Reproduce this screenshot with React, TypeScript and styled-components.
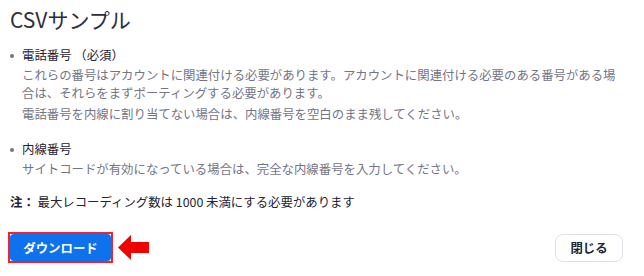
import styled, { createGlobalStyle } from 'styled-components'

const GlobalStyle = createGlobalStyle`
  body {
    margin: 0;
    background: #fff;
    font-family: "Noto Sans CJK JP", "Noto Sans", sans-serif;
  }
`

const items = [
  {
    label: '電話番号 （必須）',
    paragraphs: [
      'これらの番号はアカウントに関連付ける必要があります。アカウントに関連付ける必要のある番号がある場合は、それらをまずポーティングする必要があります。',
      '電話番号を内線に割り当てない場合は、内線番号を空白のまま残してください。',
    ],
  },
  {
    label: '内線番号',
    paragraphs: ['サイトコードが有効になっている場合は、完全な内線番号を入力してください。'],
  },
]

const App = () => {
  return (
    <Dialog>
      <GlobalStyle />
      <Title>CSVサンプル</Title>

      <FieldList>
        {items.map((item) => (
          <FieldItem key={item.label}>
            <FieldLabel>{item.label}</FieldLabel>
            {item.paragraphs.map((p) => (
              <FieldText key={p}>{p}</FieldText>
            ))}
          </FieldItem>
        ))}
      </FieldList>

      <Note>
        <strong>注：</strong> 最大レコーディング数は 1000 未満にする必要があります
      </Note>

      <Footer>
        <Highlight>
          <PrimaryButton>ダウンロード</PrimaryButton>
        </Highlight>
        <Arrow width="31" height="25" viewBox="0 0 31 25">
          <path d="M0 12.5 L13 0 L13 7 L31 7 L31 18 L13 18 L13 25 Z" fill="#f00000" />
        </Arrow>
        <Spacer />
        <SecondaryButton>閉じる</SecondaryButton>
      </Footer>
    </Dialog>
  )
}

export default App

const Dialog = styled.div`
  width: 644px;
  height: 276px;
  box-sizing: border-box;
  padding: 4px 21px 0 10px;
  display: flex;
  flex-direction: column;
`

const Title = styled.h2`
  margin: 0;
  font-size: 21px;
  line-height: 30px;
  font-weight: 400;
  color: #2d2d3a;
`

const FieldList = styled.ul`
  list-style: none;
  margin: 12px 0 0;
  padding: 0;
  display: flex;
  flex-direction: column;
  gap: 17px;
`

const FieldItem = styled.li`
  position: relative;
  padding-left: 12px;
  font-size: 12.4px;
  line-height: 18px;

  &::before {
    content: '';
    position: absolute;
    left: 0;
    top: 8px;
    width: 4px;
    height: 4px;
    border-radius: 50%;
    background: #6e7680;
  }
`

const FieldLabel = styled.div`
  color: #232333;
  margin-bottom: 2px;
`

const FieldText = styled.p`
  margin: 0;
  color: #747487;

  & + & {
    margin-top: 3px;
  }
`

const Note = styled.p`
  margin: 15px 0 0;
  font-size: 12.4px;
  line-height: 18px;
  color: #232333;

  strong {
    font-weight: 700;
  }
`

const Footer = styled.div`
  display: flex;
  align-items: center;
  margin-top: 21px;
`

const Highlight = styled.div`
  margin-left: -2px;
  border: 2px solid #f5222d;
  display: flex;
`

const PrimaryButton = styled.button`
  width: 101px;
  height: 27px;
  border: none;
  border-radius: 4px;
  background: #0e72ed;
  color: #fff;
  font-family: inherit;
  font-size: 12.4px;
  font-weight: 700;
  padding: 0;
  cursor: pointer;
`

const Arrow = styled.svg`
  margin-left: 5px;
  display: block;
`

const Spacer = styled.div`
  flex: 1;
`

const SecondaryButton = styled.button`
  width: 68px;
  height: 28px;
  border: 1px solid #dfe3e8;
  border-radius: 8px;
  background: #fff;
  color: #232333;
  font-family: inherit;
  font-size: 12.4px;
  font-weight: 700;
  padding: 0;
  cursor: pointer;
`
